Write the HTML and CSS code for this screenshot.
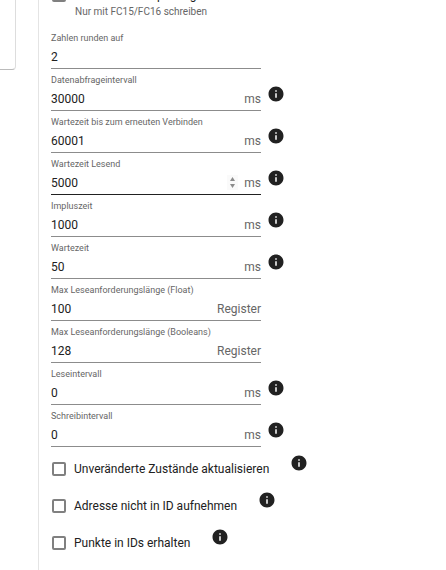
FILE: index.html
```html
<!DOCTYPE html>
<html lang="de">
<head>
    <meta charset="UTF-8">
    <meta name="viewport" content="width=device-width, initial-scale=1.0">
    <title>Einstellungen</title>

    <link rel="stylesheet" href="styles.css">
</head>

<body>
    <svg class="sprite" aria-hidden="true">
      <symbol id="info" viewBox="0 0 24 24">
        <path d="M12 2C6.48 2 2 6.48 2 12s4.48 10 10 10 10-4.48 10-10S17.52 2 12 2zm1 15h-2v-6h2v6zm0-8h-2V7h2v2z" />
      </symbol>
    </svg>

    <div class="page">
      <div class="side">
        <div class="side-card"></div>
      </div>
      <form class="settings">
        <div class="check check-first">
          <input type="checkbox" id="multi" aria-describedby="multi-help">
          <label for="multi">Verwende Multiple Register</label>
        </div>
        <p class="help" id="multi-help">Nur mit FC15/FC16 schreiben</p>

        <div class="field">
          <label for="round">Zahlen runden auf</label>
          <div class="control"><input type="number" id="round" value="2"></div>
        </div>
        <div class="field">
          <label for="poll">Datenabfrageintervall</label>
          <div class="control"><input type="number" id="poll" value="30000"><span class="unit">ms</span></div>
          <svg class="info"><use href="#info" /></svg>
        </div>
        <div class="field">
          <label for="recon">Wartezeit bis zum erneuten Verbinden</label>
          <div class="control"><input type="number" id="recon" value="60001"><span class="unit">ms</span></div>
          <svg class="info"><use href="#info" /></svg>
        </div>
        <div class="field">
          <label for="timeout">Wartezeit Lesend</label>
          <div class="control hover">
            <input type="number" id="timeout" value="5000">
            <svg class="spin" viewBox="0 0 11 15"><path d="M3 6 5.500 2 8 6zM3 9h5l-2.500 4z" /></svg>
            <span class="unit">ms</span>
          </div>
          <svg class="info"><use href="#info" /></svg>
        </div>
        <div class="field">
          <label for="pulse">Impluszeit</label>
          <div class="control"><input type="number" id="pulse" value="1000"><span class="unit">ms</span></div>
          <svg class="info"><use href="#info" /></svg>
        </div>
        <div class="field">
          <label for="wait">Wartezeit</label>
          <div class="control"><input type="number" id="wait" value="50"><span class="unit">ms</span></div>
          <svg class="info"><use href="#info" /></svg>
        </div>
        <div class="field">
          <label for="maxfloat">Max Leseanforderungslänge (Float)</label>
          <div class="control"><input type="number" id="maxfloat" value="100"><span class="unit">Register</span></div>
        </div>
        <div class="field">
          <label for="maxbool">Max Leseanforderungslänge (Booleans)</label>
          <div class="control"><input type="number" id="maxbool" value="128"><span class="unit">Register</span></div>
        </div>
        <div class="field">
          <label for="read">Leseintervall</label>
          <div class="control"><input type="number" id="read" value="0"><span class="unit">ms</span></div>
          <svg class="info"><use href="#info" /></svg>
        </div>
        <div class="field">
          <label for="write">Schreibintervall</label>
          <div class="control"><input type="number" id="write" value="0"><span class="unit">ms</span></div>
          <svg class="info"><use href="#info" /></svg>
        </div>

        <div class="checks">
          <div class="check">
            <input type="checkbox" id="unchanged">
            <label for="unchanged">Unveränderte Zustände aktualisieren</label>
            <svg class="info"><use href="#info" /></svg>
          </div>
          <div class="check">
            <input type="checkbox" id="noaddr">
            <label for="noaddr">Adresse nicht in ID aufnehmen</label>
            <svg class="info"><use href="#info" /></svg>
          </div>
          <div class="check">
            <input type="checkbox" id="dots">
            <label for="dots">Punkte in IDs erhalten</label>
            <svg class="info"><use href="#info" /></svg>
          </div>
        </div>
      </form>
    </div>
</body>
</html>
```
FILE: styles.css
```css
* {
  margin: 0;
  padding: 0;
  box-sizing: border-box;
}

body {
  font-family: Roboto, "Liberation Sans", sans-serif;
  font-size: 12px;
  color: #212121;
  background: #fff;
}

.sprite {
  display: none;
}

.page {
  display: flex;
  min-height: 100vh;
  overflow: hidden;
}

.side {
  width: 38px;
  flex-shrink: 0;
}

.side-card {
  width: 16px;
  height: 70px;
  border: 1px solid #ddd;
  border-width: 0 1px 1px 0;
  border-bottom-color: #bbb;
  border-radius: 0 0 4px 0;
}

.settings {
  flex: 1;
  padding-left: 12px;
  border-left: 1px solid #e4e4e4;
}

.field {
  display: grid;
  grid-template-columns: 210px 18px;
  grid-template-rows: 16px 26px;
  column-gap: 6px;
}

.field label {
  grid-column: 1 / 3;
  font-size: 9px;
  line-height: 12px;
  padding-top: 5px;
  color: #666;
}

.control {
  display: flex;
  align-items: center;
  padding-top: 2px;
  border-bottom: 1px solid #8c8c8c;
}

.control.hover {
  border-bottom-color: #212121;
}

.control input {
  flex: 1;
  min-width: 0;
  border: 0;
  outline: 0;
  background: none;
  font: inherit;
  color: inherit;
  appearance: textfield;
}

.control input::-webkit-inner-spin-button {
  display: none;
}

.unit {
  color: #666;
}

.spin {
  width: 11px;
  height: 15px;
  margin-right: 6px;
  fill: #8c8c8c;
  background: #fafafa;
}

.info {
  width: 18px;
  height: 18px;
  fill: #212121;
}

.check {
  display: flex;
  align-items: center;
  height: 37px;
}

.check input {
  appearance: none;
  width: 14px;
  height: 14px;
  margin: 0 8px 0 1px;
  border: 2px solid #808080;
  border-radius: 2px;
}

.check .info {
  margin: 0 0 12px 21px;
}

/* scrolled half out at the top */
.check-first {
  margin-top: -16px;
  height: 22px;
}

.help {
  font-size: 10px;
  line-height: 12px;
  margin: 0 0 9px 24px;
  color: #666;
}

.checks {
  padding-top: 3px;
}
```
